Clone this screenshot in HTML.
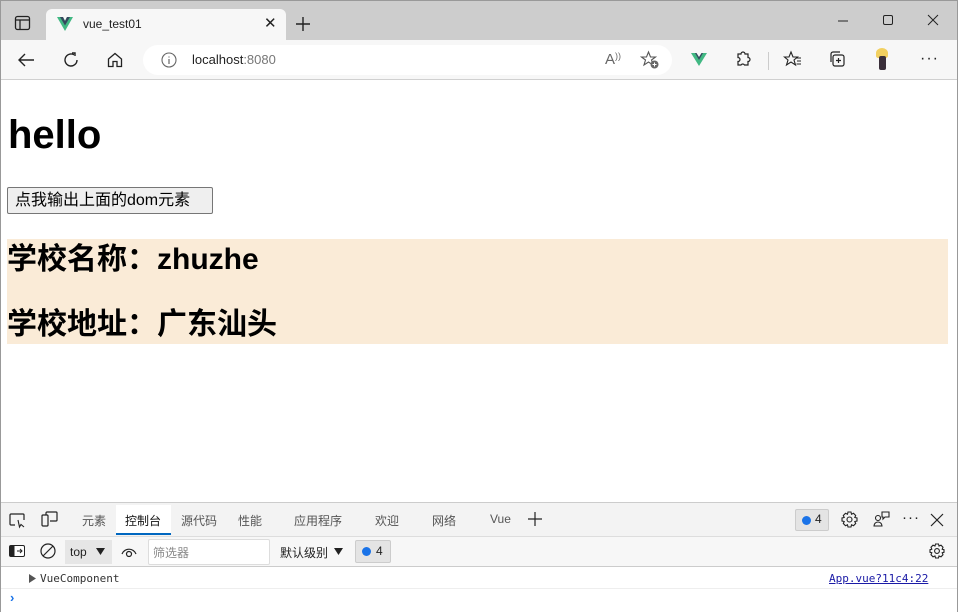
<!DOCTYPE html>
<html><head><meta charset="utf-8"><style>
*{margin:0;padding:0;box-sizing:border-box}
body{width:958px;height:612px;overflow:hidden;position:relative;background:#fff;font-family:"Liberation Sans","Noto Sans CJK SC",sans-serif;}
.a{position:absolute}
svg{position:absolute;overflow:visible}
.tab{font-size:12px;color:#555;top:512px}
</style></head><body>
<!-- title bar -->
<div class="a" style="left:0;top:0;width:958px;height:40px;background:#cdcdcd;border-top:1px solid #999;border-left:1px solid #999;border-right:1px solid #999"></div>
<svg style="left:15px;top:16px" width="16" height="16"><rect x="0.5" y="0.5" width="14" height="13" rx="2" fill="none" stroke="#222" stroke-width="1.3"/><line x1="0.5" y1="4" x2="14.5" y2="4" stroke="#222" stroke-width="1.3"/><line x1="5" y1="4" x2="5" y2="13.5" stroke="#222" stroke-width="1.3"/></svg>
<div class="a" style="left:46px;top:9px;width:240px;height:32px;background:#f7f7f7;border-radius:6px 6px 0 0"></div>
<svg style="left:57px;top:17px" width="16" height="14"><polygon points="0,0 6,0 8,4 10,0 16,0 8,14" fill="#41b883"/><polygon points="3,0 6,0 8,4 10,0 13,0 8,8.5" fill="#35495e"/></svg>
<div class="a" style="left:83px;top:17px;font-size:12px;color:#222">vue_test01</div>
<div class="a" style="left:264px;top:14px;font-size:15px;color:#222">✕</div>
<svg style="left:296px;top:17px" width="14" height="14"><path d="M7 0V14M0 7H14" stroke="#222" stroke-width="1.4"/></svg>
<svg style="left:838px;top:20px" width="10" height="2"><path d="M0 1H10" stroke="#222"/></svg>
<svg style="left:883px;top:15px" width="10" height="10"><rect x="0.5" y="0.5" width="9" height="9" rx="1.5" fill="none" stroke="#222"/></svg>
<svg style="left:928px;top:15px" width="10" height="10"><path d="M0 0L10 10M10 0L0 10" stroke="#222"/></svg>
<!-- toolbar -->
<div class="a" style="left:0;top:40px;width:958px;height:40px;background:#f7f7f7;border-bottom:1px solid #d0d0d0;border-left:1px solid #999;border-right:1px solid #999"></div>
<svg style="left:18px;top:53px" width="16" height="14"><path d="M16 7H1M7 1L1 7L7 13" stroke="#222" stroke-width="1.4" fill="none"/></svg>
<svg style="left:63px;top:52px" width="16" height="16"><path d="M14 8A6 6 0 1 1 11 2.8" stroke="#222" stroke-width="1.4" fill="none"/><path d="M9 1H12V4" stroke="#222" stroke-width="1.4" fill="none"/></svg>
<svg style="left:107px;top:52px" width="16" height="16"><path d="M1.5 7L8 1.5L14.5 7V14.5H10V9.5H6V14.5H1.5Z" stroke="#222" stroke-width="1.3" fill="none"/></svg>
<div class="a" style="left:143px;top:45px;width:529px;height:30px;background:#fff;border-radius:15px"></div>
<svg style="left:161px;top:52px" width="16" height="16"><circle cx="8" cy="8" r="7" stroke="#666" fill="none" stroke-width="1.1"/><path d="M8 7V12M8 4.5V5.5" stroke="#666" stroke-width="1.2"/></svg>
<div class="a" style="left:192px;top:52px;font-size:13px;color:#222">localhost<span style="color:#777">:8080</span></div>
<div class="a" style="left:605px;top:51px;font-size:15px;color:#666">A<span style="font-size:9px;vertical-align:top">))</span></div>
<svg style="left:641px;top:51px" width="18" height="18"><path d="M7.5 1L9.5 6H14.5L10.5 9L12 14L7.5 11L3 14L4.5 9L0.5 6H5.5Z" fill="none" stroke="#555" stroke-width="1.1"/><circle cx="13.5" cy="13.5" r="4" fill="#666"/><path d="M13.5 11.5V15.5M11.5 13.5H15.5" stroke="#fff"/></svg>
<svg style="left:691px;top:53px" width="16" height="13"><polygon points="0,0 5,0 8,5 11,0 16,0 8,13" fill="#41b883"/><polygon points="4,0 5.5,0 8,4 10.5,0 12,0 8,7" fill="#35495e"/></svg>
<svg style="left:736px;top:51px" width="16" height="16"><path d="M5 3A2 2 0 0 1 9 3H12V6.5A2 2 0 0 1 12 10.5V14H8.5A2 2 0 0 0 5 14H2V10.5A2 2 0 0 0 2 6.5V3Z" stroke="#222" stroke-width="1.2" fill="none"/></svg>
<div class="a" style="left:768px;top:52px;width:1px;height:18px;background:#ccc"></div>
<svg style="left:784px;top:51px" width="18" height="16"><path d="M7 1L9 6H13.5L10 9L11.5 14L7 11L2.5 14L4 9L0.5 6H5Z" fill="none" stroke="#222" stroke-width="1.1"/><path d="M12 7H17M13 10H17M12.5 13H17" stroke="#222" stroke-width="1.1"/></svg>
<svg style="left:829px;top:51px" width="17" height="17"><rect x="4" y="4" width="11" height="11" rx="2" fill="none" stroke="#222" stroke-width="1.2"/><path d="M2 11V3A2 2 0 0 1 4 1H11" fill="none" stroke="#222" stroke-width="1.2"/><path d="M9.5 7V12M7 9.5H12" stroke="#222" stroke-width="1.2"/></svg>
<div class="a" style="left:876px;top:48px;width:12px;height:10px;background:#f2d060;border-radius:50% 50% 20% 20%"></div>
<div class="a" style="left:879px;top:56px;width:7px;height:14px;background:#3a2f3a;border-radius:2px"></div>
<div class="a" style="left:920px;top:50px;font-size:16px;color:#222;letter-spacing:1px">···</div>
<!-- page content -->
<div class="a" style="left:8px;top:111px;font-size:40px;font-weight:bold;color:#000;line-height:48px">hello</div>
<div class="a" style="left:7px;top:187px;width:206px;height:27px;background:#efefef;border:1px solid #767676;border-radius:2px;font-size:16px;color:#000;line-height:25px;padding-left:7px">点我输出上面的dom元素</div>
<div class="a" style="left:7px;top:239px;width:941px;height:105px;background:#faebd7"></div>
<div class="a" style="left:7px;top:242px;font-size:30px;font-weight:bold;line-height:36px">学校名称：zhuzhe</div>
<div class="a" style="left:7px;top:307px;font-size:30px;font-weight:bold;line-height:36px">学校地址：广东汕头</div>
<!-- devtools -->
<div class="a" style="left:0;top:502px;width:958px;height:34px;background:#f3f3f3;border-top:1px solid #ccc"></div>
<svg style="left:9px;top:513px" width="17" height="14"><path d="M6 12H2A1 1 0 0 1 1 11V2A1 1 0 0 1 2 1H14A1 1 0 0 1 15 2V7" fill="none" stroke="#222" stroke-width="1.2"/><path d="M9 7L10.5 14L12 11.5L15 14" fill="none" stroke="#222" stroke-width="1.1"/></svg>
<svg style="left:41px;top:511px" width="17" height="17"><rect x="1" y="4" width="6" height="11" rx="1" fill="none" stroke="#222" stroke-width="1.2"/><path d="M5 4V2A1 1 0 0 1 6 1H15A1 1 0 0 1 16 2V9A1 1 0 0 1 15 10H9" fill="none" stroke="#222" stroke-width="1.2"/></svg>
<div class="tab a" style="left:82px">元素</div>
<div class="a" style="left:116px;top:505px;width:55px;height:30px;background:#fff;border-bottom:2px solid #0067c0"></div>
<div class="tab a" style="left:125px;color:#111">控制台</div>
<div class="tab a" style="left:181px">源代码</div>
<div class="tab a" style="left:238px">性能</div>
<div class="tab a" style="left:294px">应用程序</div>
<div class="tab a" style="left:375px">欢迎</div>
<div class="tab a" style="left:432px">网络</div>
<div class="tab a" style="left:490px">Vue</div>
<svg style="left:528px;top:512px" width="14" height="14"><path d="M7 0V14M0 7H14" stroke="#222" stroke-width="1.2"/></svg>
<div class="a" style="left:795px;top:509px;width:34px;height:22px;background:#e4e4e4;border:1px solid #ccc;border-radius:2px"></div>
<div class="a" style="left:802px;top:516px;width:9px;height:9px;background:#1a73e8;border-radius:50%"></div>
<div class="a" style="left:815px;top:512px;font-size:12px;color:#222">4</div>
<svg style="left:841px;top:511px" width="17" height="17"><circle cx="8.5" cy="8.5" r="2.5" fill="none" stroke="#222" stroke-width="1.1"/><path d="M7 1H10L10.5 3.2L12.5 2.3L14.7 4.5L13.8 6.5L16 7V10L13.8 10.5L14.7 12.5L12.5 14.7L10.5 13.8L10 16H7L6.5 13.8L4.5 14.7L2.3 12.5L3.2 10.5L1 10V7L3.2 6.5L2.3 4.5L4.5 2.3L6.5 3.2Z" fill="none" stroke="#222" stroke-width="1.1"/></svg>
<svg style="left:873px;top:511px" width="18" height="17"><circle cx="5" cy="7" r="2.5" fill="none" stroke="#222" stroke-width="1.1"/><path d="M1 15A4 4 0 0 1 9 15Z" fill="none" stroke="#222" stroke-width="1.1"/><path d="M9 1H16V6H12L10 8V6H9Z" fill="none" stroke="#222" stroke-width="1.1"/></svg>
<div class="a" style="left:902px;top:509px;font-size:15px;color:#222;letter-spacing:1px">···</div>
<svg style="left:931px;top:514px" width="12" height="12"><path d="M0 0L12 12M12 0L0 12" stroke="#222" stroke-width="1.2"/></svg>
<!-- console toolbar -->
<div class="a" style="left:0;top:536px;width:958px;height:31px;background:#f7f7f7;border-top:1px solid #ddd;border-bottom:1px solid #ccc"></div>
<svg style="left:9px;top:545px" width="16" height="12"><rect x="0.5" y="0.5" width="15" height="11" rx="1.5" fill="#fff" stroke="#222"/><rect x="0.5" y="0.5" width="5" height="11" fill="#222"/><path d="M8 6H13M11 4L13 6L11 8" stroke="#222" fill="none"/></svg>
<svg style="left:40px;top:543px" width="16" height="16"><circle cx="8" cy="8" r="7" fill="none" stroke="#222" stroke-width="1.2"/><path d="M3 13L13 3" stroke="#222" stroke-width="1.2"/></svg>
<div class="a" style="left:65px;top:540px;width:47px;height:24px;background:#e6e6e6"></div>
<div class="a" style="left:70px;top:545px;font-size:12px;color:#222">top</div>
<svg style="left:96px;top:548px" width="9" height="7"><polygon points="0,0 9,0 4.5,7" fill="#222"/></svg>
<svg style="left:121px;top:545px" width="16" height="12"><path d="M1 9A7.5 7.5 0 0 1 15 9" fill="none" stroke="#222" stroke-width="1.2"/><circle cx="8" cy="9" r="2.5" fill="none" stroke="#222" stroke-width="1.2"/></svg>
<div class="a" style="left:148px;top:539px;width:122px;height:26px;background:#fff;border:1px solid #ddd;border-radius:2px"></div>
<div class="a" style="left:153px;top:544px;font-size:12px;color:#888">筛选器</div>
<div class="a" style="left:280px;top:544px;font-size:12px;color:#222">默认级别</div>
<svg style="left:334px;top:548px" width="9" height="7"><polygon points="0,0 9,0 4.5,7" fill="#222"/></svg>
<div class="a" style="left:355px;top:540px;width:36px;height:23px;background:#e4e4e4;border:1px solid #ccc;border-radius:2px"></div>
<div class="a" style="left:362px;top:547px;width:9px;height:9px;background:#1a73e8;border-radius:50%"></div>
<div class="a" style="left:376px;top:544px;font-size:12px;color:#222">4</div>
<svg style="left:929px;top:543px" width="16" height="16"><circle cx="8" cy="8" r="2.4" fill="none" stroke="#222" stroke-width="1.1"/><path d="M6.5 1H9.5L10 3L12 2.2L14 4.2L13.2 6.2L15 6.7V9.3L13.2 9.8L14 11.8L12 13.8L10 13L9.5 15H6.5L6 13L4 13.8L2 11.8L2.8 9.8L1 9.3V6.7L2.8 6.2L2 4.2L4 2.2L6 3Z" fill="none" stroke="#222" stroke-width="1.1"/></svg>
<!-- console lines -->
<svg style="left:29px;top:574px" width="7" height="9"><polygon points="0,0 7,4.5 0,9" fill="#555"/></svg>
<div class="a" style="left:40px;top:572px;font-size:11px;color:#333;font-family:'DejaVu Sans Mono','Liberation Mono',monospace">VueComponent</div>
<div class="a" style="left:829px;top:572px;font-size:11px;color:#1a1aa6;text-decoration:underline;font-family:'DejaVu Sans Mono','Liberation Mono',monospace">App.vue?11c4:22</div>
<div class="a" style="left:0;top:588px;width:958px;height:1px;background:#eee"></div>
<div class="a" style="left:10px;top:590px;font-size:13px;color:#1a73e8;font-weight:bold">›</div>
<div class="a" style="left:0;top:0;width:1px;height:612px;background:#999"></div>
<div class="a" style="left:957px;top:0;width:1px;height:612px;background:#999"></div>
</body></html>
